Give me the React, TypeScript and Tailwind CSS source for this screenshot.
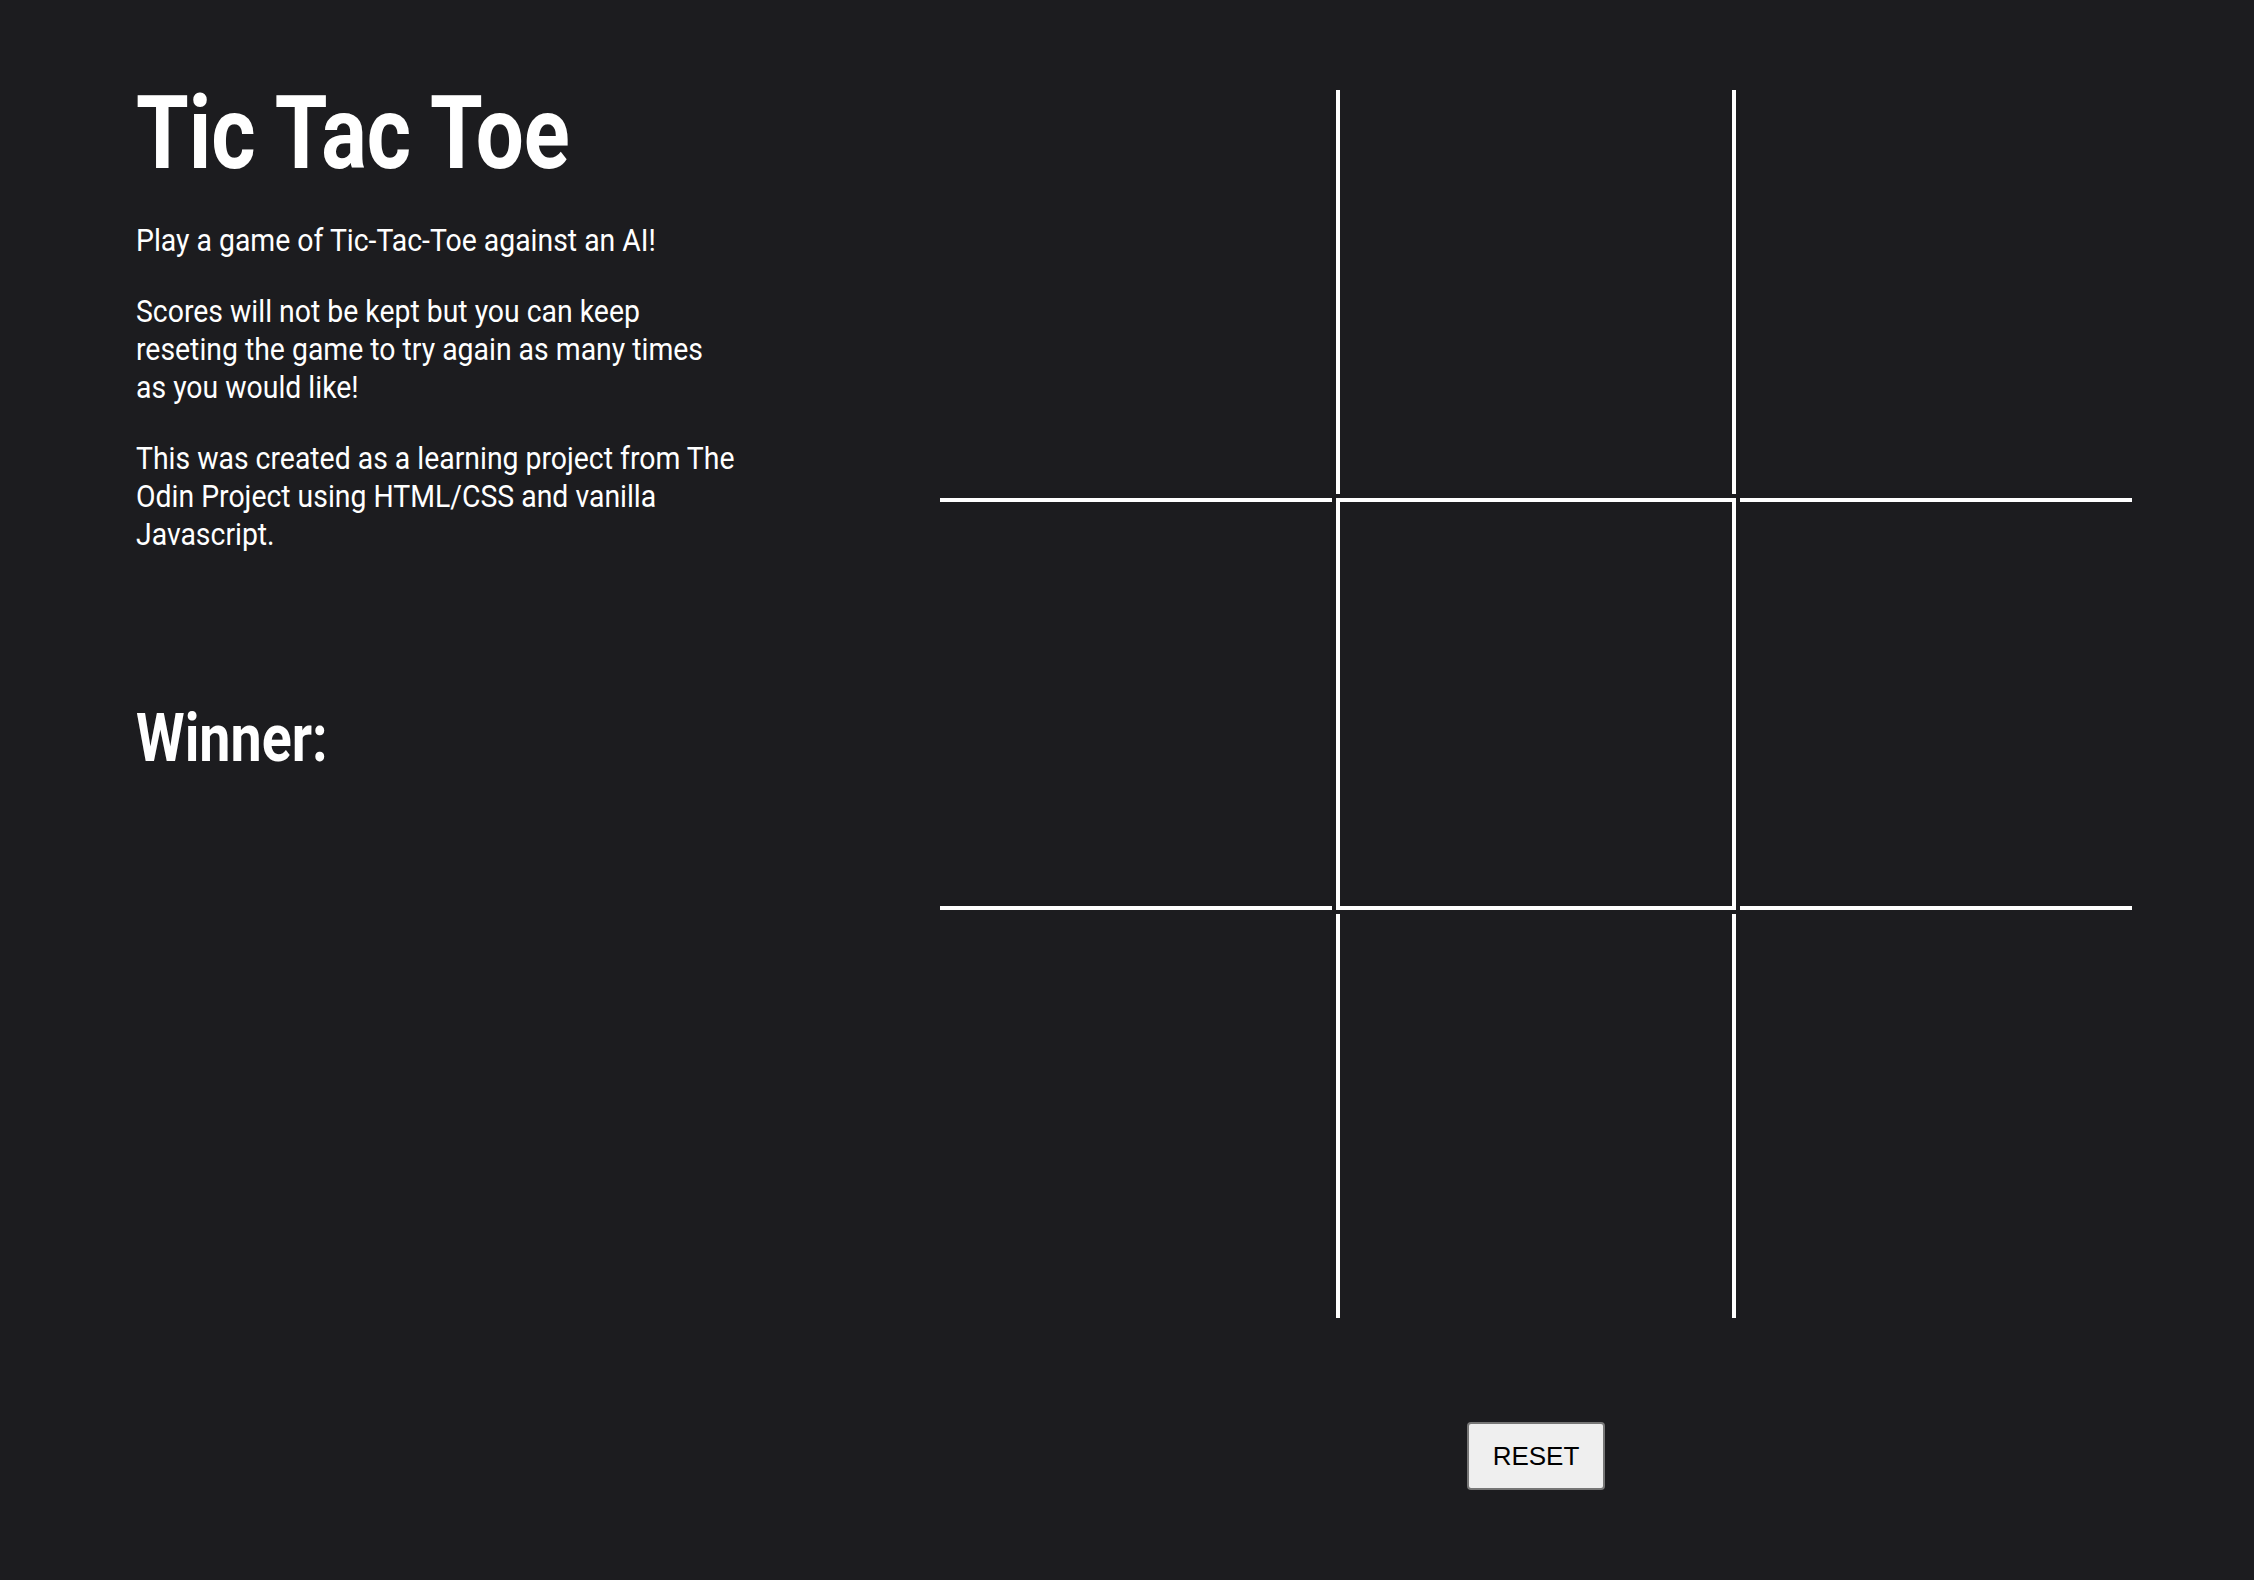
import React from "react";

const cells = [
  "",
  "border-x-4",
  "",
  "border-y-4",
  "border-4",
  "border-y-4",
  "",
  "border-x-4",
  "",
];

export default function App() {
  return (
    <div className="min-h-screen w-full bg-[#1c1c1f] flex text-white font-[family-name:Roboto,sans-serif]">
      <div className="w-[940px] shrink-0 pl-[136px] pt-[82px]">
        <h1 className="text-[102px] leading-none font-bold origin-left scale-x-[0.835] whitespace-nowrap">
          Tic Tac Toe
        </h1>
        <div className="origin-left scale-x-[0.887] text-[32px] leading-[38px] whitespace-nowrap">
          <p className="mt-[37px]">Play a game of Tic-Tac-Toe against an AI!</p>
          <p className="mt-[33px]">
            Scores will not be kept but you can keep
            <br />
            reseting the game to try again as many times
            <br />
            as you would like!
          </p>
          <p className="mt-[33px]">
            This was created as a learning project from The
            <br />
            Odin Project using HTML/CSS and vanilla
            <br />
            Javascript.
          </p>
        </div>
        <h2 className="mt-[153px] text-[66px] leading-none font-bold origin-left scale-x-[0.842] whitespace-nowrap">
          Winner:
        </h2>
      </div>
      <div className="pt-[90px] flex flex-col items-center">
        <div className="grid grid-cols-[392px_400px_392px] grid-rows-[404px_412px_404px] gap-[4px]">
          {cells.map((c, i) => (
            <div key={i} className={`border-white ${c}`} />
          ))}
        </div>
        <button className="mt-[104px] h-[68px] w-[138px] rounded-[4px] border-2 border-[#767676] bg-[#efefef] text-black text-[26px] font-[family-name:'Liberation_Sans',Arial,sans-serif]">
          RESET
        </button>
      </div>
    </div>
  );
}
